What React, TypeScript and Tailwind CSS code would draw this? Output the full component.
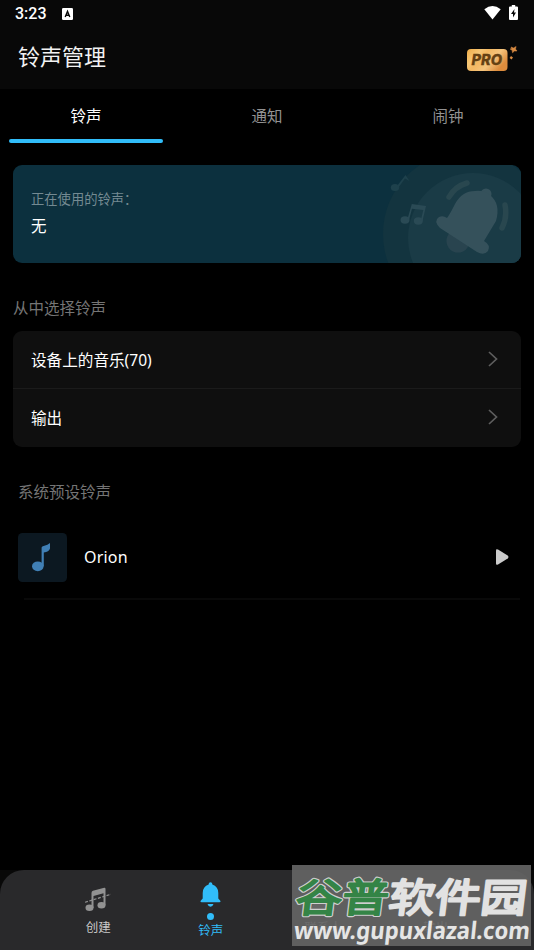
import React from "react";

const cjk = "font-['Noto_Sans','Noto_Sans_CJK_SC',sans-serif]";

function StatusBar() {
  return (
    <div className="flex h-7 items-center pl-[15px] pr-[16px]">
      <span className="font-[Roboto,sans-serif] text-[16px] font-medium leading-7 text-white">3:23</span>
      <svg className="ml-[15px]" width="11" height="12" viewBox="0 0 11 12">
        <rect width="11" height="12" rx="1.3" fill="#fff" />
        <path d="M3.2 9 5.5 3.4 7.8 9M4 7.2h3" fill="none" stroke="#080808" strokeWidth="1.4" />
      </svg>
      <svg className="mb-[2px] ml-auto" width="17" height="14" viewBox="0 0 17 14">
        <path d="M0.3 3.2Q8.5-3 16.7 3.2L8.5 13.6Z" fill="#fff" />
      </svg>
      <svg className="mb-[3px] ml-2" width="9" height="15" viewBox="0 0 9 15">
        <path d="M2.8 0h3.4v1.5H8q1 0 1 1V14q0 1-1 1H1q-1 0-1-1V2.5q0-1 1-1h1.8Z" fill="#fff" />
        <path d="M5.5 4 2 9h2v3.500L7 7.500H5Z" fill="#080808" />
      </svg>
    </div>
  );
}

function ProBadge() {
  return (
    <svg width="52" height="28" viewBox="0 0 52 28">
      <defs>
        <linearGradient id="gold" x1="0" y1="0" x2="1" y2="0.5">
          <stop offset="0" stopColor="#efad48" />
          <stop offset="0.3" stopColor="#f6c676" />
          <stop offset="0.45" stopColor="#f3b862" />
          <stop offset="0.7" stopColor="#f5c47d" />
          <stop offset="1" stopColor="#dd8c3d" />
        </linearGradient>
      </defs>
      <rect x="0" y="4" width="40.5" height="22" rx="4" fill="url(#gold)" />
      <text x="4.500" y="20" textLength="30.5" lengthAdjust="spacingAndGlyphs" fill="#654113" stroke="#654113" strokeWidth="0.300" fontFamily="Inter, sans-serif" fontSize="14" fontWeight="800" fontStyle="italic">PRO</text>
      <path d="m44 2 2.600.9 2.500-1.400-.6 2.600 1.500 1.900-2.600.1-1.900 1.700-.4-2.500-2-1.300 1.600-.6Z" fill="#d98b42" stroke="#d98b42" strokeWidth="0.500" />
      <path d="m44 11 2 1.500-1.400 2-2-1.500Z" fill="#d98b42" />
    </svg>
  );
}

function BellArt() {
  return (
    <svg className="block h-full w-[174px]" viewBox="0 0 174 98">
      <circle cx="119" cy="69" r="83" fill="#13343f" />
      <circle cx="126" cy="73" r="65" fill="#1a3b46" />
      <g fill="#1e414c">
        <ellipse cx="48" cy="22.500" rx="4.200" ry="3.600" />
        <path d="M50 21 58.500 10l4 6-4.500-2.500-6.500 9Z" />
      </g>
      <g fill="#2a4a55">
        <ellipse cx="58" cy="55" rx="4.500" ry="3.700" />
        <ellipse cx="71.300" cy="56" rx="4.500" ry="3.700" />
        <path d="m60.500 54 4.300-15 14.200 2-3.500 15-1.700-.5 2.500-10.500-11.300-1.300-3 11.300Z" />
      </g>
      <circle cx="111" cy="76" r="11.500" fill="#29444f" />
      <path d="M102 32q6-10.500 18-14M158 40q2.500 12-3 23" fill="none" stroke="#29474f" strokeWidth="5.500" strokeLinecap="round" />
      <g fill="#35515b">
        <circle cx="139" cy="29" r="5.500" />
        <path d="M108 39Q115 26 128 26Q137 25 143 30Q154 39 149 56L137 76Q144 80 141 86Q137 91 130 87L93 63Q86 56 92 52Q96 50 100 53Q103 49 108 39Z" />
      </g>
    </svg>
  );
}

function Chevron() {
  return (
    <svg className="mb-[2px]" width="10" height="16" viewBox="0 0 10 16" fill="none" stroke="#5e5e5e" strokeWidth="1.700">
      <path d="m1 1 7.500 7L1 15" />
    </svg>
  );
}

function SourceRow({ label }: { label: string }) {
  return (
    <div className="flex h-[58px] items-center justify-between pl-[18px] pr-[23px] text-[15.600px] leading-[22px] text-white">
      <span>{label}</span>
      <Chevron />
    </div>
  );
}

function NoteTile() {
  return (
    <svg width="49" height="49" viewBox="0 0 49 49">
      <rect width="49" height="49" rx="4.500" fill="#0c1821" />
      <ellipse cx="19.800" cy="33.300" rx="5.800" ry="4.900" fill="#407fb5" />
      <path d="M23.600 33V14.500Q24 13.500 25.600 13.100Q30 12 32 10v5.500Q31 19 25.800 19.500V33Z" fill="#407fb5" />
    </svg>
  );
}

function CreateIcon() {
  return (
    <svg width="26" height="25" viewBox="0 0 26 25">
      <g fill="#929292">
        <ellipse cx="4.500" cy="20.800" rx="4" ry="3.300" />
        <ellipse cx="16.500" cy="18.300" rx="4" ry="3.300" />
        <path d="M6.500 6Q6.500 4.200 8 3.800L19.200.8q1.300-.2 1.300 1.100V18h-2V6.300L8.500 9v12h-2Z" />
      </g>
      <path d="M0 15.300 26 7.300" fill="none" stroke="#929292" strokeWidth="1.200" strokeDasharray="3 1.500" />
    </svg>
  );
}

function BellIcon() {
  return (
    <svg width="21" height="25" viewBox="0 0 21 25" fill="#31bdf9">
      <path d="M8.700 2.500Q8.500.2 10.500.2q2 0 1.800 2.300Q18.300 4.500 18.300 11v5.500l2 2.200q.8 1.600-1 1.600H1.700q-1.800 0-1-1.600l2-2.200V11q0-6.500 6-8.500ZM7.500 22h6q-.8 2.700-3 2.700T7.500 22Z" />
    </svg>
  );
}

function PersonIcon() {
  return (
    <svg width="26" height="25" viewBox="0 0 26 25" fill="#929292">
      <circle cx="13" cy="7" r="6" />
      <path d="M1 24q0-9 12-9t12 9Z" />
    </svg>
  );
}

function OutputIcon() {
  return (
    <svg width="26" height="25" viewBox="0 0 26 25" fill="#929292">
      <path d="M1 4q0-2 2-2h7l3 3h10q2 0 2 2v14q0 2-2 2H3q-2 0-2-2Z" />
    </svg>
  );
}

function Watermark() {
  return (
    <div className="absolute left-[292px] top-[865px] h-[81px] w-[239px] bg-[#646464]/92">
      <svg className="overflow-visible" width="239" height="81" viewBox="0 0 239 81">
        <g fontFamily="'Noto Sans CJK SC', sans-serif" fontSize="39.500" fontWeight="400" transform="skewX(-7)" strokeLinejoin="round">
          <text x="8" y="47.500" textLength="93" lengthAdjust="spacingAndGlyphs" fill="#cfcfcf" stroke="#cfcfcf" strokeWidth="4.200">谷普</text>
          <text x="8" y="47.500" textLength="93" lengthAdjust="spacingAndGlyphs" fill="#348446" stroke="#348446" strokeWidth="2">谷普</text>
          <text x="101" y="47.500" textLength="138" lengthAdjust="spacingAndGlyphs" fill="#e2e2e2" stroke="#e2e2e2" strokeWidth="2.400">软件园</text>
        </g>
        <text x="9" y="74" transform="skewX(-6)" textLength="236" lengthAdjust="spacingAndGlyphs" fill="#e5e5e5" fontFamily="'Noto Sans', sans-serif" fontSize="24" fontWeight="700">www.gupuxlazal.com</text>
      </svg>
    </div>
  );
}

export default function App() {
  return (
    <div className={`relative flex h-[950px] w-[534px] flex-col overflow-hidden bg-black ${cjk}`}>
      <header className="h-[89px] bg-[#080808]">
        <StatusBar />
        <div className="flex items-start justify-between pl-[18px] pr-[15px]">
          <h1 className="pt-3 text-[22px] leading-8 text-[#f2f2f2]">铃声管理</h1>
          <div className="pt-[17px]">
            <ProBadge />
          </div>
        </div>
      </header>

      <nav className="grid h-[54px] grid-cols-3 text-[15.500px] leading-6 text-[#929292]">
        <div className="flex flex-col items-center justify-between pr-[6px] text-white">
          <span className="pt-[15px]">铃声</span>
          <i className="block h-1 w-[154px] rounded-sm bg-[#31bdf9]" />
        </div>
        <div className="pt-[15px] text-center">通知</div>
        <div className="pl-[6px] pt-[15px] text-center">闹钟</div>
      </nav>

      <section className="ml-[13px] mt-[22px] flex h-[98px] w-[508px] justify-between overflow-hidden rounded-[9px] bg-[#0c303e]">
        <div className="pl-[18px] pt-6">
          <p className="text-[13.300px] leading-5 text-[#748a92]">正在使用的铃声：</p>
          <p className="mt-[5px] text-[15.500px] leading-6 text-white">无</p>
        </div>
        <BellArt />
      </section>

      <h2 className="ml-[13px] mt-[33px] text-[15.500px] leading-6 text-[#757575]">从中选择铃声</h2>
      <section className="ml-[13px] mt-[11px] w-[508px] divide-y divide-[#1b1b1b] rounded-[9px] bg-[#0f0f0f]">
        <SourceRow label="设备上的音乐(70)" />
        <SourceRow label="输出" />
      </section>

      <h2 className="ml-[18px] mt-[33px] text-[15.500px] leading-6 text-[#757575]">系统预设铃声</h2>
      <div className="ml-[18px] mt-[29px] flex h-[49px] w-[491px] items-center">
        <NoteTile />
        <span className="mb-[2px] ml-[17px] text-[16px] leading-6 tracking-[0.200px] text-white">Orion</span>
        <svg className="mb-[2px] ml-auto" width="13" height="16" viewBox="0 0 13 16">
          <path d="M0 1.500Q0-.5 2 .6l9.700 6q1.500 1.400 0 2.800L2 15.400Q0 16.500 0 14.500Z" fill="#cbcbcb" />
        </svg>
      </div>
      <div className="ml-6 mt-4 h-[2px] w-[496px] bg-[#090909]" />

      <footer className="mt-auto bg-[#080808]">
        <div className="grid h-20 grid-cols-4 rounded-t-[24px] bg-[#29292b] px-[42px] text-[12.500px] leading-5 text-[#c8c8c8]">
          <div className="flex flex-col items-center pt-[17px]">
            <CreateIcon />
            <span className="mt-[6px]">创建</span>
          </div>
          <div className="flex flex-col items-center pt-3 text-[#31bdf9]">
            <BellIcon />
            <i className="mt-[6px] block size-[7px] rounded-full bg-[#31bdf9]" />
            <span className="mt-px">铃声</span>
          </div>
          <div className="flex flex-col items-center pt-[17px]">
            <PersonIcon />
            <span className="mt-[6px]">联系人</span>
          </div>
          <div className="flex flex-col items-center pt-[17px]">
            <OutputIcon />
            <span className="mt-[6px]">输出</span>
          </div>
        </div>
      </footer>
      <Watermark />
    </div>
  );
}
